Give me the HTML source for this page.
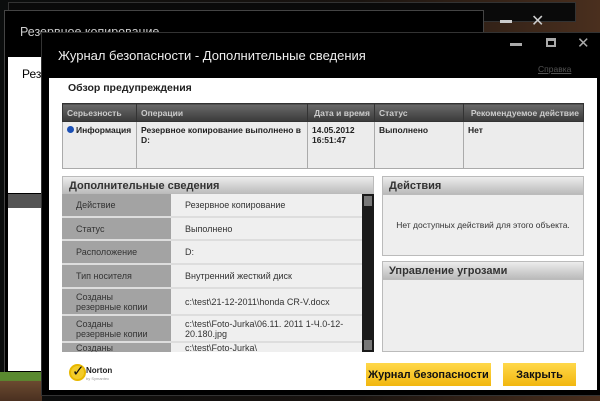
<!DOCTYPE html>
<html><head><meta charset="utf-8"><style>
*{margin:0;padding:0;box-sizing:border-box}
body{width:600px;height:401px;overflow:hidden;background:#120c08;font-family:"Liberation Sans","DejaVu Sans",sans-serif;position:relative}
.a{position:absolute}
.bg{left:0;top:0;width:600px;height:401px;background:linear-gradient(90deg,#0b0d0d 0%,#1a1410 60%,#4a2f1e 100%)}
.w0{left:8px;top:2px;width:568px;height:20px;background:#0a0a0a;border:1px solid #333}
.w1{left:4px;top:10px;width:480px;height:370px;background:#000;border:1px solid #444}
.t1{left:20px;top:25px;color:#ccc;font-size:12.5px}
.wh1{left:8px;top:57px;width:40px;height:136px;background:#fff}
.db{left:8px;top:194px;width:40px;height:14px;background:#555}
.wh2{left:8px;top:208px;width:40px;height:163px;background:#fff}
.main{left:41px;top:32px;width:570px;height:364px;background:#000;border:1px solid #333}
.title{left:58px;top:48px;color:#eee;font-size:13px}
.cont{left:49px;top:78px;width:548px;height:312px;background:#fff}
table{border-collapse:collapse;table-layout:fixed}
.th{left:62px;top:103px;width:522px;height:65px;font-size:8.5px;font-weight:bold}
.th td{border:1px solid #aaa;vertical-align:top;padding:3px 4px;overflow:hidden}
.hdr td{background:linear-gradient(#6a6a6a,#3a3a3a);color:#ccc;height:18px;border-color:#333;white-space:nowrap;vertical-align:middle}
.row td{background:#ececec;color:#222;height:47px}
.ph{height:18px;background:linear-gradient(#ececec,#bdbdbd);font-size:11px;font-weight:bold;color:#333;padding:3px 6px;border:1px solid #bbb}
.lab{left:62px;width:109px;background:#a3a3a3;color:#333;font-size:9px;padding-left:14px;display:flex;align-items:center;border-bottom:2px solid #ddd}
.val{left:171px;width:191px;background:#efefef;color:#333;font-size:9px;padding-left:14px;display:flex;align-items:center;border-bottom:2px solid #ddd}
.btn{background:linear-gradient(#ffd84a,#f2b70f);font-weight:bold;font-size:11px;color:#111;display:flex;align-items:center;justify-content:center}
</style></head><body>
<div class="a bg"></div>
<div class="a w0"></div>
<div class="a w1"></div>
<div class="a t1">Резервное копирование</div>
<div class="a" style="left:500px;top:20px;width:12px;height:3px;background:#ccc"></div>
<div class="a" style="left:531px;top:11px;color:#ccc;font-size:16px;font-weight:bold">✕</div>
<div class="a wh1"></div>
<div class="a" style="left:22px;top:67px;font-size:12px">Резе</div>
<div class="a db"></div>
<div class="a wh2"></div>
<div class="a" style="left:0;top:372px;width:42px;height:29px;background:linear-gradient(#5a8a30 0,#5a8a30 30%,#6b4a30 31%,#4a3020 100%)"></div>
<div class="a main"></div>
<div class="a title">Журнал безопасности - Дополнительные сведения</div>
<div class="a" style="left:510px;top:43px;width:12px;height:3px;background:#aaa"></div>
<div class="a" style="left:546px;top:38px;width:10px;height:9px;border:2px solid #aaa;border-top-width:3px"></div>
<div class="a" style="left:577px;top:34px;color:#aaa;font-size:15px;font-weight:bold">✕</div>
<div class="a" style="left:538px;top:64px;color:#555;font-size:8.5px;text-decoration:underline">Справка</div>
<div class="a cont"></div>
<div class="a" style="left:68px;top:82px;font-size:10.5px;font-weight:bold;color:#222">Обзор предупреждения</div>
<table class="a th">
<colgroup><col style="width:74px"><col style="width:171px"><col style="width:67px"><col style="width:89px"><col></colgroup>
<tr class="hdr"><td>Серьезность</td><td>Операции</td><td style="text-align:right">Дата и время</td><td>Статус</td><td style="text-align:right">Рекомендуемое действие</td></tr>
<tr class="row"><td style="white-space:nowrap"><span style="display:inline-block;width:7px;height:7px;border-radius:50%;background:#1a4fb5;margin-right:2px"></span>Информация</td><td>Резервное копирование выполнено в D:</td><td>14.05.2012 16:51:47</td><td>Выполнено</td><td>Нет</td></tr>
</table>
<div class="a ph" style="left:62px;top:176px;width:312px">Дополнительные сведения</div>
<div class="a lab" style="top:194px;height:24px">Действие</div><div class="a val" style="top:194px;height:24px">Резервное копирование</div>
<div class="a lab" style="top:218px;height:23px">Статус</div><div class="a val" style="top:218px;height:23px">Выполнено</div>
<div class="a lab" style="top:241px;height:24px">Расположение</div><div class="a val" style="top:241px;height:24px">D:</div>
<div class="a lab" style="top:265px;height:24px">Тип носителя</div><div class="a val" style="top:265px;height:24px">Внутренний жесткий диск</div>
<div class="a lab" style="top:289px;height:27px">Созданы<br>резервные копии</div><div class="a val" style="top:289px;height:27px">c:\test\21-12-2011\honda CR-V.docx</div>
<div class="a lab" style="top:316px;height:27px">Созданы<br>резервные копии</div><div class="a val" style="top:316px;height:27px">c:\test\Foto-Jurka\06.11. 2011 1-Ч.0-12-20.180.jpg</div>
<div class="a lab" style="top:343px;height:9px;overflow:hidden;align-items:flex-start;border:0">Созданы</div><div class="a val" style="top:343px;height:9px;overflow:hidden;align-items:flex-start;border:0">c:\test\Foto-Jurka\</div>
<div class="a" style="left:362px;top:194px;width:12px;height:158px;background:#1a1a1a"></div>
<div class="a" style="left:364px;top:196px;width:8px;height:10px;background:#777"></div>
<div class="a" style="left:364px;top:340px;width:8px;height:10px;background:#777"></div>
<div class="a ph" style="left:382px;top:176px;width:202px">Действия</div>
<div class="a" style="left:382px;top:194px;width:202px;height:62px;background:#eee;border:1px solid #bbb;font-size:8.5px;color:#333;display:flex;align-items:center;justify-content:center">Нет доступных действий для этого объекта.</div>
<div class="a ph" style="left:382px;top:261px;width:202px">Управление угрозами</div>
<div class="a" style="left:382px;top:279px;width:202px;height:73px;background:#eee;border:1px solid #bbb"></div>
<div class="a" style="left:69px;top:364px;width:17px;height:17px;border-radius:50%;background:#f3cc2a;border:2px solid #e8b800"></div>
<div class="a" style="left:72px;top:362px;font-size:15px;font-weight:bold;color:#111">✓</div>
<div class="a" style="left:86px;top:366px;font-size:8px;font-weight:bold;color:#222">Norton</div>
<div class="a" style="left:86px;top:376px;font-size:4px;color:#999">by Symantec</div>
<div class="a btn" style="left:366px;top:363px;width:125px;height:23px">Журнал безопасности</div>
<div class="a btn" style="left:503px;top:363px;width:73px;height:23px">Закрыть</div>
</body></html>
